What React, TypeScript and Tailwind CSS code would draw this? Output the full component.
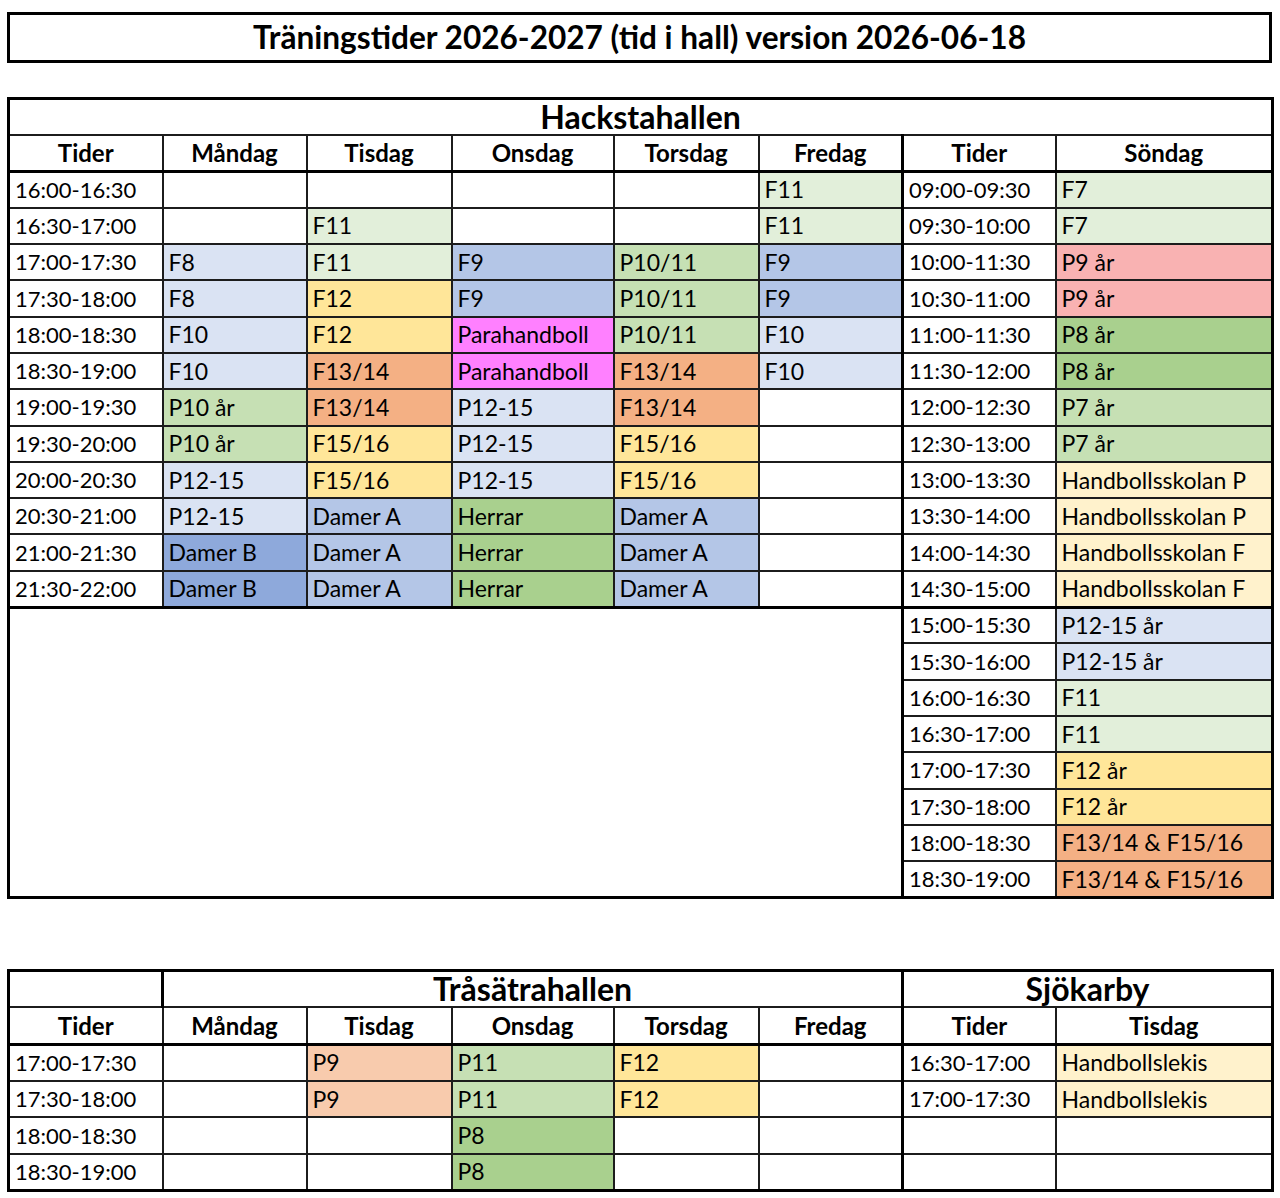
import React from "react";

// Excel-like fills used in the schedule
const fill: Record<string, string> = {
  "": "",
  lg: "bg-[#e2efda]",
  lb: "bg-[#dae3f3]",
  b: "bg-[#b4c6e7]",
  g: "bg-[#c6e0b4]",
  dg: "bg-[#a9d08e]",
  y: "bg-[#ffe699]",
  ly: "bg-[#fff2cc]",
  o: "bg-[#f4b084]",
  lo: "bg-[#f8cbad]",
  db: "bg-[#8ea9db]",
  m: "bg-[#ff80ff]",
  p: "bg-[#f9b2b2]",
};

type Slot = [string, string];

const hackstaTimes = [
  "16:00-16:30",
  "16:30-17:00",
  "17:00-17:30",
  "17:30-18:00",
  "18:00-18:30",
  "18:30-19:00",
  "19:00-19:30",
  "19:30-20:00",
  "20:00-20:30",
  "20:30-21:00",
  "21:00-21:30",
  "21:30-22:00",
];

// Måndag .. Fredag
const hackstaWeek: Slot[][] = [
  [["", ""], ["", ""], ["", ""], ["", ""], ["F11", "lg"]],
  [["", ""], ["F11", "lg"], ["", ""], ["", ""], ["F11", "lg"]],
  [["F8", "lb"], ["F11", "lg"], ["F9", "b"], ["P10/11", "g"], ["F9", "b"]],
  [["F8", "lb"], ["F12", "y"], ["F9", "b"], ["P10/11", "g"], ["F9", "b"]],
  [["F10", "lb"], ["F12", "y"], ["Parahandboll", "m"], ["P10/11", "g"], ["F10", "lb"]],
  [["F10", "lb"], ["F13/14", "o"], ["Parahandboll", "m"], ["F13/14", "o"], ["F10", "lb"]],
  [["P10 år", "g"], ["F13/14", "o"], ["P12-15", "lb"], ["F13/14", "o"], ["", ""]],
  [["P10 år", "g"], ["F15/16", "y"], ["P12-15", "lb"], ["F15/16", "y"], ["", ""]],
  [["P12-15", "lb"], ["F15/16", "y"], ["P12-15", "lb"], ["F15/16", "y"], ["", ""]],
  [["P12-15", "lb"], ["Damer A", "b"], ["Herrar", "dg"], ["Damer A", "b"], ["", ""]],
  [["Damer B", "db"], ["Damer A", "b"], ["Herrar", "dg"], ["Damer A", "b"], ["", ""]],
  [["Damer B", "db"], ["Damer A", "b"], ["Herrar", "dg"], ["Damer A", "b"], ["", ""]],
];

const sunday: [string, string, string][] = [
  ["09:00-09:30", "F7", "lg"],
  ["09:30-10:00", "F7", "lg"],
  ["10:00-11:30", "P9 år", "p"],
  ["10:30-11:00", "P9 år", "p"],
  ["11:00-11:30", "P8 år", "dg"],
  ["11:30-12:00", "P8 år", "dg"],
  ["12:00-12:30", "P7 år", "g"],
  ["12:30-13:00", "P7 år", "g"],
  ["13:00-13:30", "Handbollsskolan P", "ly"],
  ["13:30-14:00", "Handbollsskolan P", "ly"],
  ["14:00-14:30", "Handbollsskolan F", "ly"],
  ["14:30-15:00", "Handbollsskolan F", "ly"],
  ["15:00-15:30", "P12-15 år", "lb"],
  ["15:30-16:00", "P12-15 år", "lb"],
  ["16:00-16:30", "F11", "lg"],
  ["16:30-17:00", "F11", "lg"],
  ["17:00-17:30", "F12 år", "y"],
  ["17:30-18:00", "F12 år", "y"],
  ["18:00-18:30", "F13/14 & F15/16", "o"],
  ["18:30-19:00", "F13/14 & F15/16", "o"],
];

const trasatra: { time: string; week: Slot[]; sjoTime: string; sjo: Slot }[] = [
  {
    time: "17:00-17:30",
    week: [["", ""], ["P9", "lo"], ["P11", "g"], ["F12", "y"], ["", ""]],
    sjoTime: "16:30-17:00",
    sjo: ["Handbollslekis", "ly"],
  },
  {
    time: "17:30-18:00",
    week: [["", ""], ["P9", "lo"], ["P11", "g"], ["F12", "y"], ["", ""]],
    sjoTime: "17:00-17:30",
    sjo: ["Handbollslekis", "ly"],
  },
  {
    time: "18:00-18:30",
    week: [["", ""], ["", ""], ["P8", "dg"], ["", ""], ["", ""]],
    sjoTime: "",
    sjo: ["", ""],
  },
  {
    time: "18:30-19:00",
    week: [["", ""], ["", ""], ["P8", "dg"], ["", ""], ["", ""]],
    sjoTime: "",
    sjo: ["", ""],
  },
];

const days = ["Måndag", "Tisdag", "Onsdag", "Torsdag", "Fredag"];

const base = "border-2 border-[#1c1c1c] px-[5px] leading-none text-black whitespace-nowrap";
const time = `${base} text-[22px]`;
const label = `${base} text-[23px]`;
const th = "border-2 border-[#1c1c1c] border-b-[3px] border-b-black text-center text-[24px] font-bold leading-none text-black";
const hall = "border-2 border-[#1c1c1c] text-center text-[32px] font-bold leading-none text-black";
const thick = "border-l-[3px] border-l-black";

function Cols() {
  return (
    <colgroup>
      <col className="w-[154px]" />
      <col className="w-[144px]" />
      <col className="w-[145px]" />
      <col className="w-[162px]" />
      <col className="w-[145px]" />
      <col className="w-[144px]" />
      <col className="w-[153px]" />
      <col className="w-[217px]" />
    </colgroup>
  );
}

export default function App() {
  return (
    <div className="min-h-[1198px] bg-white pl-[7px] pt-[12px] font-['Lato','Noto_Sans',sans-serif]">
      <div className="flex h-[51px] w-[1265px] items-center justify-center border-[3px] border-black">
        <h1 className="text-[31.6px] font-bold leading-none text-black">
          Träningstider 2026-2027 (tid i hall) version 2026-06-18
        </h1>
      </div>

      <table className="mt-[34px] w-[1264px] table-fixed border-collapse border-[3px] border-black">
        <Cols />
        <tbody>
          <tr className="h-[36px]">
            <td colSpan={8} className={hall}>
              Hackstahallen
            </td>
          </tr>
          <tr className="h-[37px]">
            <td className={th}>Tider</td>
            {days.map((d) => (
              <td key={d} className={th}>
                {d}
              </td>
            ))}
            <td className={`${th} ${thick}`}>Tider</td>
            <td className={th}>Söndag</td>
          </tr>
          {sunday.map(([t, l, color], i) => (
            <tr key={t + i} className="h-[36.3px]">
              {i < 12 ? (
                <>
                  <td className={time}>{hackstaTimes[i]}</td>
                  {hackstaWeek[i].map(([s, c], j) => (
                    <td key={j} className={`${label} ${fill[c]}`}>
                      {s}
                    </td>
                  ))}
                </>
              ) : i === 12 ? (
                <td colSpan={6} rowSpan={8} className="border-2 border-[#1c1c1c] border-t-[3px] border-t-black" />
              ) : null}
              <td className={`${time} ${thick} ${i === 12 ? "border-t-[3px] border-t-black" : ""}`}>{t}</td>
              <td className={`${label} ${fill[color]} ${i === 12 ? "border-t-[3px] border-t-black" : ""}`}>{l}</td>
            </tr>
          ))}
        </tbody>
      </table>

      <table className="mt-[70px] w-[1264px] table-fixed border-collapse border-[3px] border-black">
        <Cols />
        <tbody>
          <tr className="h-[37px]">
            <td className="border-2 border-[#1c1c1c] border-r-[3px] border-r-black" />
            <td colSpan={5} className={hall}>
              Tråsätrahallen
            </td>
            <td colSpan={2} className={`${hall} ${thick}`}>
              Sjökarby
            </td>
          </tr>
          <tr className="h-[37px]">
            <td className={th}>Tider</td>
            {days.map((d) => (
              <td key={d} className={th}>
                {d}
              </td>
            ))}
            <td className={`${th} ${thick}`}>Tider</td>
            <td className={th}>Tisdag</td>
          </tr>
          {trasatra.map((r) => (
            <tr key={r.time} className="h-[36.5px]">
              <td className={time}>{r.time}</td>
              {r.week.map(([s, c], j) => (
                <td key={j} className={`${label} ${fill[c]}`}>
                  {s}
                </td>
              ))}
              <td className={`${time} ${thick}`}>{r.sjoTime}</td>
              <td className={`${label} ${fill[r.sjo[1]]}`}>{r.sjo[0]}</td>
            </tr>
          ))}
        </tbody>
      </table>
    </div>
  );
}
